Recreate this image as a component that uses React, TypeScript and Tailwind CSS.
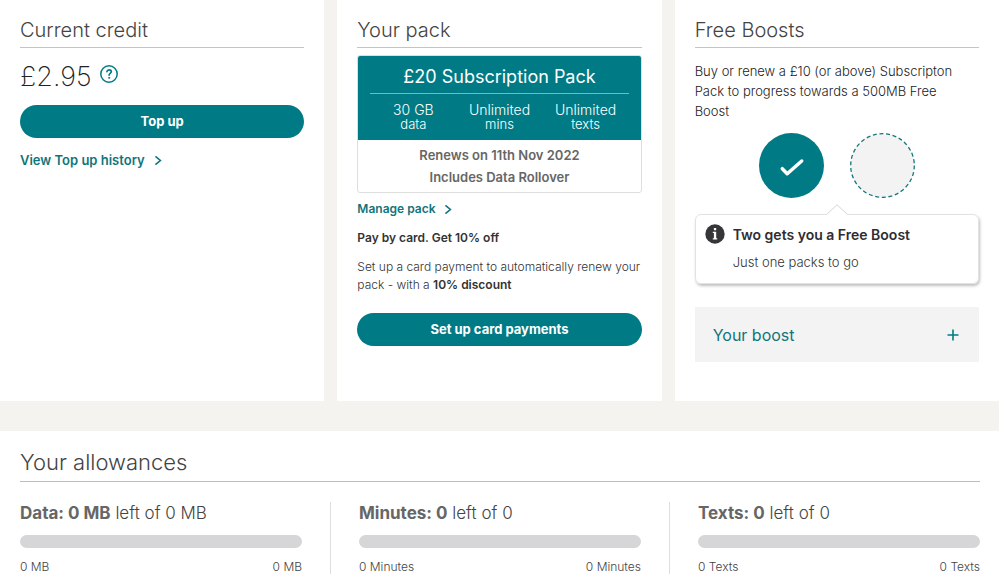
import type { ReactNode } from "react";

const cardTitle = "border-b border-[#c4c4c4] pt-[17px] pb-1 text-xl leading-[26px] font-light text-[#444]";
const pillButton =
  "block h-[33px] w-full cursor-pointer rounded-full bg-[#007b85] text-[13px] font-bold text-white";

function Card({ title, children }: { title: string; children: ReactNode }) {
  return (
    <section className="bg-white px-5 pb-[39px]">
      <h2 className={cardTitle}>{title}</h2>
      {children}
    </section>
  );
}

function ArrowLink({ children, className }: { children: ReactNode; className: string }) {
  return (
    <a href="#" className={`inline-flex items-center gap-2.5 font-semibold text-[#10757b] ${className}`}>
      {children}
      <svg width="7" height="9" viewBox="0 0 7 9" fill="none" stroke="currentColor" strokeWidth="1.6" aria-hidden="true">
        <path d="M1 .8 5.4 4.5 1 8.2" strokeLinecap="round" />
      </svg>
    </a>
  );
}

function CreditCard() {
  return (
    <Card title="Current credit">
      <div className="mt-[13px] mb-3 flex items-start gap-2">
        <p className="text-[27px] leading-8 font-extralight text-[#222]">£2.95</p>
        <button type="button" aria-label="About your credit" className="mt-1 cursor-pointer text-[#007b85]">
          <svg width="18" height="18" viewBox="0 0 18 18" fill="none" stroke="currentColor" strokeLinecap="round">
            <circle cx="9" cy="9" r="8.2" strokeWidth="1.5" />
            <path d="M6.9 6.6c.2-1.2 1-1.8 2.2-1.8 1.3 0 2.2.7 2.2 1.8 0 1.700-2.200 1.700-2.200 3.500" strokeWidth="1.7" />
            <circle cx="9.1" cy="12.8" r=".6" fill="currentColor" strokeWidth=".8" />
          </svg>
        </button>
      </div>
      <button type="button" className={pillButton}>
        Top up
      </button>
      <ArrowLink className="mt-3 text-[13px] leading-5">View Top up history</ArrowLink>
    </Card>
  );
}

const packItems = [
  ["30 GB", "data"],
  ["Unlimited", "mins"],
  ["Unlimited", "texts"],
];

function PackCard() {
  return (
    <Card title="Your pack">
      <div className="mt-[7px] overflow-hidden rounded-[3px] border border-[#dedede] text-center">
        <div className="-mx-px -mt-px bg-[#007b85] px-[13px] pt-[9px] pb-[9px] text-white">
          <h3 className="border-b border-[#6cbcc2] pb-[3px] text-lg leading-[26px] font-normal">£20 Subscription Pack</h3>
          <ul className="mt-[9px] grid grid-cols-3">
            {packItems.map(([amount, kind]) => (
              <li key={kind} className="text-sm leading-[14px] font-light">
                {amount}
                <span className="block text-[13px] leading-[14px]">{kind}</span>
              </li>
            ))}
          </ul>
        </div>
        <div className="py-1 text-[13px] leading-[22px] font-semibold text-[#666]">
          <p>Renews on 11th Nov 2022</p>
          <p>Includes Data Rollover</p>
        </div>
      </div>
      <ArrowLink className="mt-[7px] text-xs leading-[18px]">Manage pack</ArrowLink>
      <p className="mt-2.5 text-xs leading-[18px] font-semibold text-[#333]">Pay by card. Get 10% off</p>
      <p className="mt-[11px] mb-[19px] text-xs leading-[18px] font-light text-[#333]">
        Set up a card payment to automatically renew your pack - with a{" "}
        <strong className="font-semibold text-[#333]">10% discount</strong>
      </p>
      <button type="button" className={pillButton}>
        Set up card payments
      </button>
    </Card>
  );
}

function BoostCard() {
  return (
    <Card title="Free Boosts">
      <p className="mt-[13px] pr-4 text-[13px] leading-5 font-light text-[#222]">
        Buy or renew a £10 (or above) Subscripton Pack to progress towards a 500MB Free Boost
      </p>
      <div className="mt-3 flex justify-center gap-[26px]">
        <svg width="65" height="65" viewBox="0 0 65 65" fill="none" role="img" aria-label="Completed">
          <circle cx="32.5" cy="32.5" r="32.5" fill="#007b85" />
          <path d="m23.3 35.7 4.900 5 14.500-12.700" stroke="#fff" strokeWidth="3.500" strokeLinecap="round" strokeLinejoin="round" />
        </svg>
        <svg width="65" height="65" viewBox="0 0 65 65" role="img" aria-label="Remaining">
          <circle cx="32.5" cy="32.5" r="31.8" fill="#f3f3f3" stroke="#17757c" strokeWidth="1.3" strokeDasharray="4 2.66" />
        </svg>
      </div>
      <div className="relative mt-4 flex gap-2 rounded-md border border-[#e2e2e2] py-[9px] pl-[9px] shadow-[1px_2px_3px_rgba(0,0,0,0.25)]">
        <svg className="absolute -top-[11px] left-1/2 -translate-x-1/2" width="22" height="12" viewBox="0 0 22 12" aria-hidden="true">
          <path d="M.5 10.5 11 .8l10.5 9.7V12H.5Z" fill="#fff" />
          <path d="M.5 10.5 11 .8l10.5 9.7" fill="none" stroke="#d5d5d5" />
        </svg>
        <svg width="20" height="20" viewBox="0 0 20 20" fill="#fff" aria-hidden="true">
          <circle cx="10" cy="10" r="9.7" fill="#36363a" />
          <rect x="8.9" y="4" width="2.3" height="2.2" rx=".5" />
          <path d="M7.8 7.700h3.400v6.600h1V15.500H7.800V14.300h1.100V8.900H7.800Z" />
        </svg>
        <div>
          <p className="text-sm leading-[22px] font-semibold text-[#2e2e32]">Two gets you a Free Boost</p>
          <p className="mt-1 text-[13px] leading-6 font-light text-[#333]">Just one packs to go</p>
        </div>
      </div>
      <button
        type="button"
        aria-expanded="false"
        className="mt-[23px] flex h-[55px] w-full cursor-pointer items-center justify-between bg-[#f3f3f3] pr-5 pl-[18px] text-base text-[#10757b]"
      >
        Your boost
        <svg width="12" height="12" viewBox="0 0 12 12" stroke="#007b85" strokeWidth="1.6" aria-hidden="true">
          <path d="M6 .5v11M.5 6h11" />
        </svg>
      </button>
    </Card>
  );
}

const allowances = [
  { name: "Data", left: "0 MB", total: "0 MB", low: "0 MB", high: "0 MB" },
  { name: "Minutes", left: "0", total: "0", low: "0 Minutes", high: "0 Minutes" },
  { name: "Texts", left: "0", total: "0", low: "0 Texts", high: "0 Texts" },
];

function Allowances() {
  return (
    <section className="mt-[30px] bg-white pr-[19px] pl-5">
      <h2 className="border-b border-[#bdbdbd] pt-[18px] pb-1.5 text-[22px] leading-[26px] font-light text-[#444]">
        Your allowances
      </h2>
      <div className="mt-5 flex">
        {allowances.map((item, index) => (
          <div
            key={item.name}
            className={`flex-1 ${index > 0 ? "ml-7 border-l border-[#dedede] pl-7" : ""}`}
          >
            <h3 className="text-[17px] leading-[22px] font-light text-[#444]">
              <strong className="font-bold text-[#666]">
                {item.name}: {item.left}
              </strong>{" "}
              left of {item.total}
            </h3>
            <progress
              value={0}
              max={1}
              aria-label={`${item.name} left`}
              className="mt-[11px] block h-[13px] w-full appearance-none overflow-hidden rounded-full [&::-webkit-progress-bar]:bg-[#d6d6d9] [&::-webkit-progress-value]:bg-[#007b85]"
            />
            <div className="mt-2.5 flex justify-between text-xs leading-[18px] font-light text-[#444]">
              <span>{item.low}</span>
              <span>{item.high}</span>
            </div>
          </div>
        ))}
      </div>
    </section>
  );
}

export default function App() {
  return (
    <main className="min-h-screen bg-[#f5f3ef] font-['Inter','Noto_Sans',sans-serif]">
      <div className="grid grid-cols-3 gap-[13px]">
        <CreditCard />
        <PackCard />
        <BoostCard />
      </div>
      <Allowances />
    </main>
  );
}
